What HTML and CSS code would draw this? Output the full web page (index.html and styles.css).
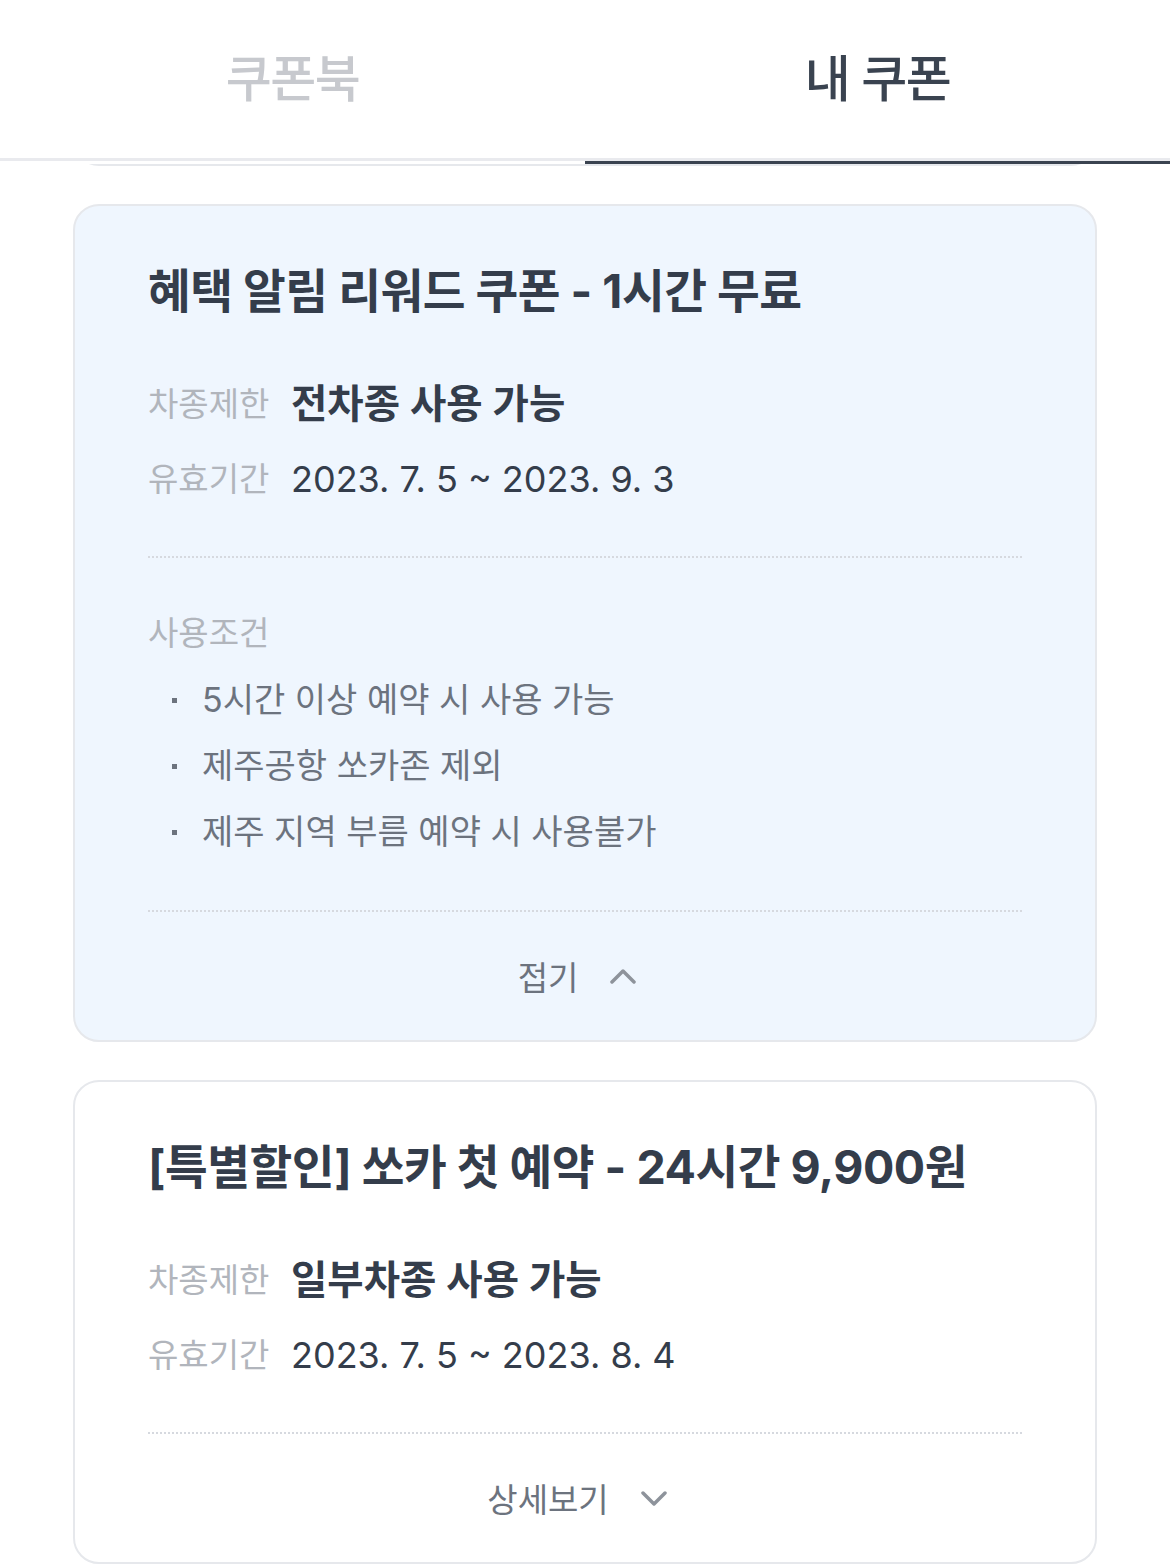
FILE: index.html
```html
<!DOCTYPE html>
<html lang="ko">
<head>
    <meta charset="UTF-8">
    <meta name="viewport" content="width=device-width, initial-scale=1.0">
    <title>내 쿠폰</title>
    <link rel="stylesheet" href="styles.css">
</head>
<body>
    <header class="tab-bar">
        <nav class="tabs">
            <div class="tab">쿠폰북</div>
            <div class="tab active">내 쿠폰</div>
        </nav>
        <div class="tab-track">
            <span></span>
            <span class="on"></span>
        </div>
    </header>

    <main class="coupon-list">
        <!-- previous card, scrolled up under the tabs -->
        <div class="peek">
            <div class="coupon peek-card"></div>
        </div>

        <section class="coupon open">
            <h2 class="coupon-title">혜택 알림 리워드 쿠폰 - 1시간 무료</h2>
            <div class="info">
                <div class="info-row">
                    <span class="label">차종제한</span>
                    <span class="value strong">전차종 사용 가능</span>
                </div>
                <div class="info-row">
                    <span class="label">유효기간</span>
                    <span class="value">2023. 7. 5 ~ 2023. 9. 3</span>
                </div>
            </div>
            <hr class="dots">
            <div class="terms">
                <div class="label">사용조건</div>
                <ul class="terms-list">
                    <li>5시간 이상 예약 시 사용 가능</li>
                    <li>제주공항 쏘카존 제외</li>
                    <li>제주 지역 부름 예약 시 사용불가</li>
                </ul>
            </div>
            <hr class="dots terms-end">
            <button class="toggle">
                <span>접기</span>
                <svg class="chevron" width="26" height="16" viewBox="0 0 26 16">
                    <polyline points="2,14 13,3 24,14" />
                </svg>
            </button>
        </section>

        <section class="coupon">
            <h2 class="coupon-title">[특별할인] 쏘카 첫 예약 - 24시간 9,900원</h2>
            <div class="info">
                <div class="info-row">
                    <span class="label">차종제한</span>
                    <span class="value strong">일부차종 사용 가능</span>
                </div>
                <div class="info-row">
                    <span class="label">유효기간</span>
                    <span class="value">2023. 7. 5 ~ 2023. 8. 4</span>
                </div>
            </div>
            <hr class="dots">
            <button class="toggle">
                <span>상세보기</span>
                <svg class="chevron" width="26" height="16" viewBox="0 0 26 16">
                    <polyline points="2,3 13,14 24,3" />
                </svg>
            </button>
        </section>
    </main>
</body>
</html>
```

FILE: styles.css
```css
body {
    margin: 0;
    background-color: #fff;
    font-family: Inter, 'Noto Sans CJK KR', sans-serif;
    color: #343d4b;
    overflow: hidden;
}

.tabs {
    display: grid;
    grid-template-columns: 1fr 1fr;
    height: 158px;
    border-bottom: 3px solid #e9eaee;
}

.tab {
    display: flex;
    justify-content: center;
    align-items: center;
    padding-bottom: 8px;
    font-size: 50px;
    font-weight: 500;
    letter-spacing: -1.5px;
    color: #c7c9ce;
}

.tab.active {
    color: #3a4350;
}

.tab-track {
    display: grid;
    grid-template-columns: 1fr 1fr;
    height: 3px;
}

.tab-track .on {
    background-color: #3a4350;
}

.coupon-list {
    display: flex;
    flex-direction: column;
    gap: 38px;
    padding: 0 73px;
}

.peek {
    height: 2px;
    overflow: hidden;
    display: flex;
    flex-direction: column;
    justify-content: flex-end;
}

.peek-card {
    height: 60px;
    flex-shrink: 0;
}

.coupon {
    border: 2px solid #e6e8ec;
    border-radius: 26px;
    background-color: #fff;
    padding: 54px 73px 0;
}

.coupon.open {
    background-color: #eff6fe;
}

.coupon-title {
    margin: 0;
    font-size: 46.5px;
    line-height: 62px;
    font-weight: 700;
    letter-spacing: -0.5px;
    color: #343d4b;
}

.info {
    display: flex;
    flex-direction: column;
    gap: 25px;
    margin-top: 57px;
}

.info-row {
    display: flex;
    align-items: center;
    line-height: 50px;
}

.label {
    font-size: 33px;
    line-height: 50px;
    color: #b1b5bc;
}

.info-row .label {
    width: 143px;
    flex-shrink: 0;
}

.value {
    font-size: 36px;
    color: #343d4b;
}

.value.strong {
    font-size: 39.5px;
    font-weight: 600;
}

.dots {
    margin: 52px 0 0;
    border: none;
    border-top: 2px dotted #d6d9df;
    height: 0;
}

.terms {
    padding-top: 50px;
}

.terms-list {
    list-style: none;
    margin: 17px 0 0;
    padding: 0;
    display: flex;
    flex-direction: column;
    gap: 16px;
}

.terms-list li {
    display: flex;
    align-items: center;
    gap: 25px;
    font-size: 34px;
    line-height: 50px;
    color: #6c737e;
}

.terms-list li::before {
    content: "";
    width: 5px;
    height: 5px;
    margin-left: 24px;
    background-color: #6c737e;
}

.dots.terms-end {
    margin-top: 53px;
}

.toggle {
    display: flex;
    justify-content: center;
    align-items: center;
    gap: 32px;
    width: 100%;
    height: 128px;
    padding: 0 16px 0 0;
    border: none;
    background: none;
    font-family: inherit;
    font-size: 33px;
    color: #6c737e;
    cursor: pointer;
}

.chevron polyline {
    fill: none;
    stroke: #8e939b;
    stroke-width: 3.5;
    stroke-linecap: round;
    stroke-linejoin: round;
}
```
